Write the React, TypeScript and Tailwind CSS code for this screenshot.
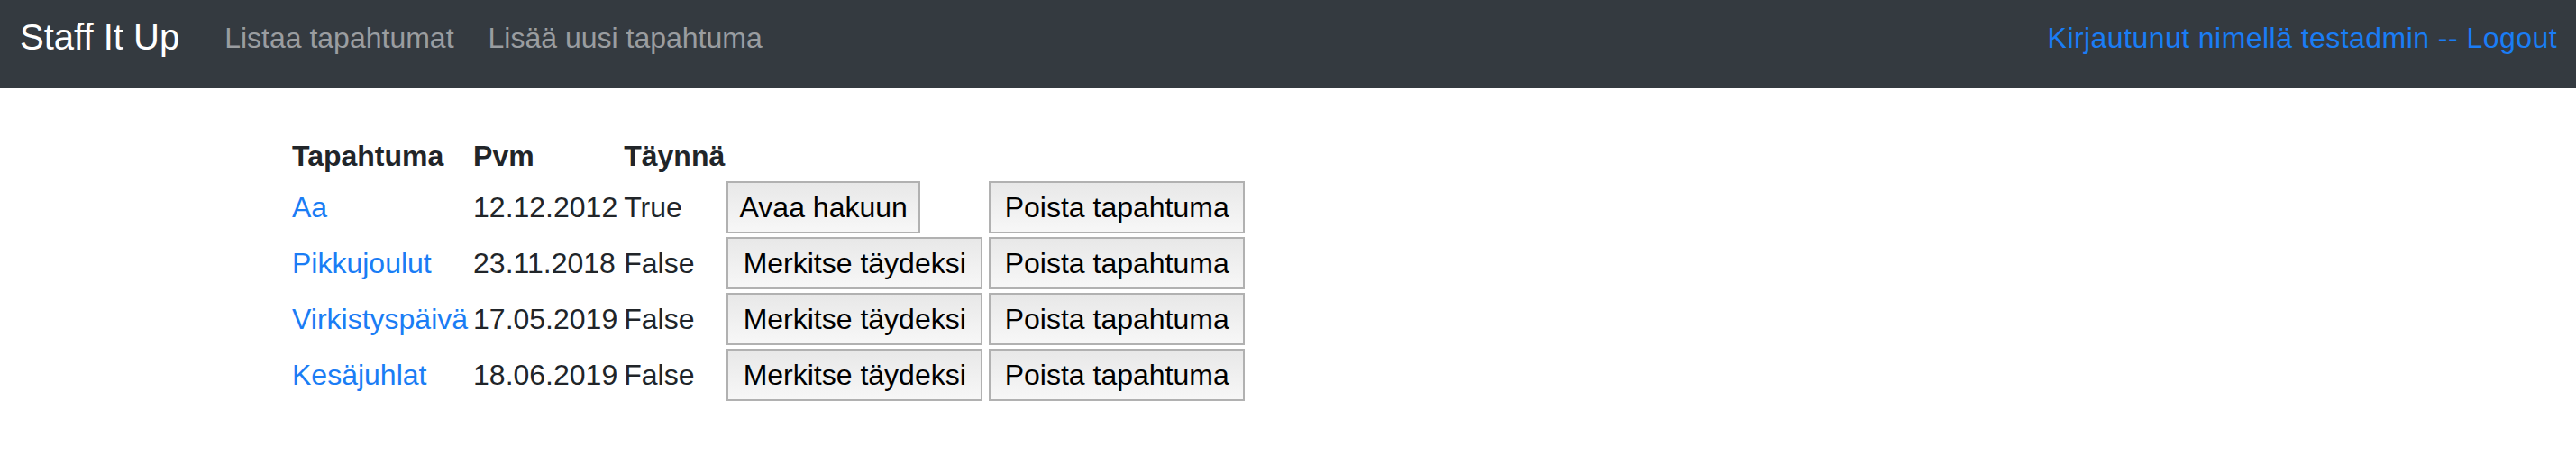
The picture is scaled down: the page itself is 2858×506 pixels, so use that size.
import React from "react";

interface Tapahtuma {
  id: number;
  nimi: string;
  pvm: string;
  taynna: boolean;
}

const tapahtumat: Tapahtuma[] = [
  { id: 1, nimi: "Aa", pvm: "12.12.2012", taynna: true },
  { id: 2, nimi: "Pikkujoulut", pvm: "23.11.2018", taynna: false },
  { id: 3, nimi: "Virkistyspäivä", pvm: "17.05.2019", taynna: false },
  { id: 4, nimi: "Kesäjuhlat", pvm: "18.06.2019", taynna: false },
];

const btn =
  "h-[58px] border-2 border-[#b1b1b1] bg-gradient-to-b from-[#e8e8e8] to-[#f7f7f7] text-[32px] leading-[48px] text-black text-center";

const Navbar = () => (
  <nav className="h-[98px] bg-[#343a40] flex items-start justify-between pl-[22px] pr-[21px]">
    <div className="flex items-start">
      <a className="mt-[11px] text-[40px] leading-[60px] text-white">Staff It Up</a>
      <a className="ml-[50px] mt-[18px] text-[32px] leading-[48px] text-[#9a9da0]">
        Listaa tapahtumat
      </a>
      <a className="ml-[38px] mt-[18px] text-[32px] leading-[48px] text-[#9a9da0]">
        Lisää uusi tapahtuma
      </a>
    </div>
    <a className="mt-[18px] text-[32px] leading-[48px] tracking-[0.45px] text-[#1a7df5]">
      Kirjautunut nimellä testadmin -- Logout
    </a>
  </nav>
);

export default function App() {
  return (
    <div
      className="min-h-[506px] bg-white text-[#212529] text-[32px] leading-[48px]"
      style={{ fontFamily: '"Liberation Sans", Arial, sans-serif' }}
    >
      <Navbar />
      <div className="pl-[322px] pt-[49px]">
        <table className="border-collapse">
          <thead>
            <tr>
              <th className="p-[2px] pr-[4px] text-left font-bold">Tapahtuma</th>
              <th className="p-[2px] pr-[5px] text-left font-bold">Pvm</th>
              <th className="p-[2px] text-left font-bold">Täynnä</th>
              <th className="p-[2px]"></th>
              <th className="p-[2px]"></th>
            </tr>
          </thead>
          <tbody>
            {tapahtumat.map((t) => (
              <tr key={t.id}>
                <td className="p-[2px] pr-[4px] whitespace-nowrap">
                  <a className="text-[#1a7df5]">{t.nimi}</a>
                </td>
                <td className="p-[2px] pr-[5px] whitespace-nowrap">{t.pvm}</td>
                <td className="p-[2px]">{t.taynna ? "True" : "False"}</td>
                <td className="p-[2px] pl-0">
                  {t.taynna ? (
                    <button className={`${btn} w-[215px]`}>Avaa hakuun</button>
                  ) : (
                    <button className={`${btn} w-[284px]`}>Merkitse täydeksi</button>
                  )}
                </td>
                <td className="p-[2px] pl-[5px]">
                  <button className={`${btn} w-[284px]`}>Poista tapahtuma</button>
                </td>
              </tr>
            ))}
          </tbody>
        </table>
      </div>
    </div>
  );
}
